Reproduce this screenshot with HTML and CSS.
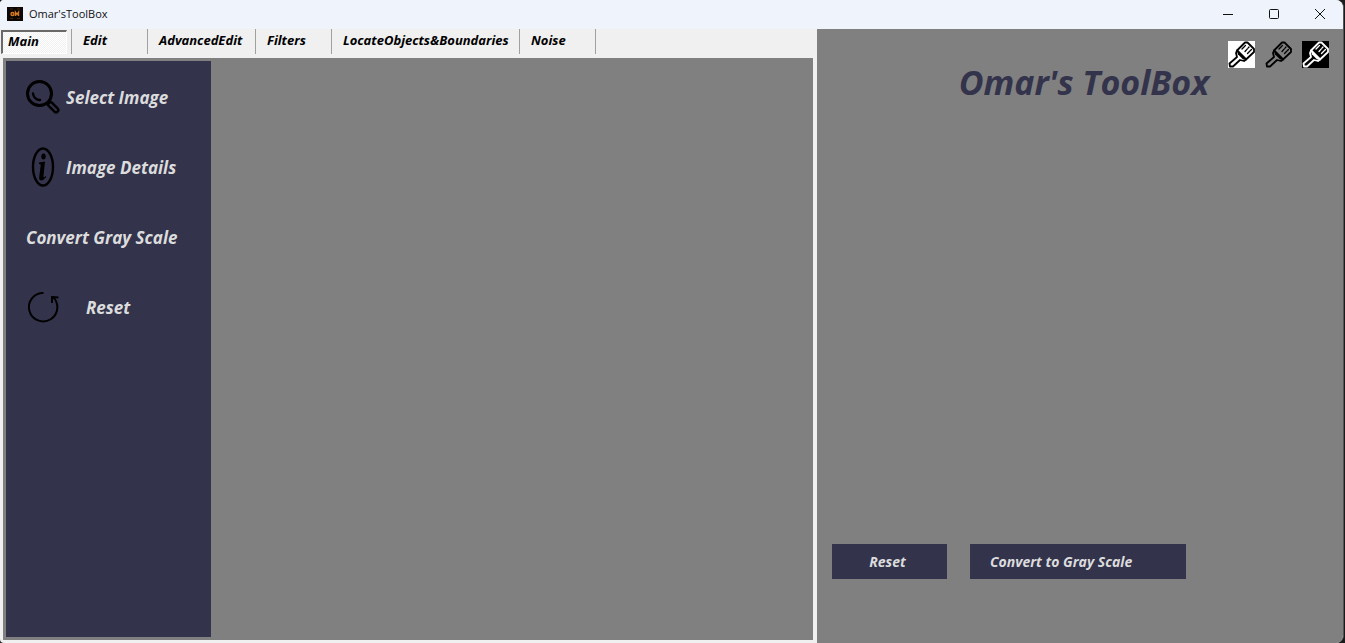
FILE: index.html
```html
<!DOCTYPE html>
<html lang="en">
<head>
<meta charset="utf-8">
<title>Omar'sToolBox</title>
<link rel="stylesheet" href="styles.css">
</head>
<body>
<svg class="defs" aria-hidden="true">
  <symbol id="brush" viewBox="0 0 27 27">
    <g stroke="currentColor" fill="none" stroke-width="1.8" stroke-linejoin="round" stroke-linecap="round">
      <path d="M17 1.500L19.500 1.500L26 8V11L18 18.500L9 9.500Z"/>
      <path d="M9 9.500L18 18.500L16 20L12 19L5 25.500L2 25.500L1.500 22.500L9 16L8 12Z"/>
      <path d="M10.500 12.500L15.500 17.500"/>
      <path d="M14 8L17.500 4.500M17 10.500L21 6M19.500 12.500L23.500 8.500" stroke-width="1.300" stroke-dasharray="3.500 1"/>
    </g>
  </symbol>
</svg>
<div class="window">
  <header class="titlebar">
    <svg class="logo" viewBox="0 0 16 14" aria-hidden="true">
      <rect width="16" height="14" fill="#0c0805"/>
      <path d="M3 2h3M10 2h3M3 11.500h3M10 11.500h3" stroke="#4a2508"/>
      <ellipse cx="5.500" cy="7" rx="1.500" ry="1.500" fill="none" stroke="#d97a22" stroke-width="1.400"/>
      <path d="M8.500 9V5.200L10 7.300L11.500 5.200V9" fill="none" stroke="#d97a22" stroke-width="1.400"/>
    </svg>
    <span class="caption">Omar'sToolBox</span>
    <div class="controls">
      <button class="control" aria-label="Minimize"><svg viewBox="0 0 12 12"><path d="M1 6.500h10"/></svg></button>
      <button class="control" aria-label="Maximize"><svg viewBox="0 0 12 12"><rect x="1.500" y="1.500" width="9" height="9" rx="1"/></svg></button>
      <button class="control" aria-label="Close"><svg viewBox="0 0 12 12"><path d="M1 1l10 10M11 1L1 11"/></svg></button>
    </div>
  </header>
  <div class="content">
    <section class="workspace">
      <nav class="tabs">
        <button class="tab active">Main</button>
        <button class="tab">Edit</button>
        <button class="tab wide">AdvancedEdit</button>
        <button class="tab">Filters</button>
        <button class="tab widest">LocateObjects&amp;Boundaries</button>
        <button class="tab">Noise</button>
      </nav>
      <div class="page">
        <aside class="sidebar">
          <button class="action">
            <svg class="icon" viewBox="0 0 34 40" fill="none" stroke="#000" aria-hidden="true">
              <circle cx="13.500" cy="16.500" r="12" stroke-width="3"/>
              <path d="M7 16.500a7 7 0 0 0 7 6.500" stroke-width="2.400" stroke-linecap="round"/>
              <path d="M24 27L30 33" stroke-width="7" stroke-linecap="round"/>
              <path d="M22 25L24 27" stroke-width="3"/>
              <path d="M24.500 27.500L30 33" stroke="#33334c" stroke-width="2" stroke-linecap="round"/>
            </svg>
            <span>Select Image</span>
          </button>
          <button class="action">
            <svg class="icon" viewBox="0 0 34 40" aria-hidden="true">
              <ellipse cx="17" cy="20" rx="10" ry="18.500" fill="none" stroke="#000" stroke-width="2.400"/>
              <ellipse cx="17.500" cy="9.500" rx="2.200" ry="3"/>
              <path d="M13 15.500L19 14.500L17.500 29Q17.500 31.500 19.500 29L20.300 30Q17.500 33.500 15 33.500Q12.700 33 13.200 30L14.800 17.500L13 17Z"/>
            </svg>
            <span>Image Details</span>
          </button>
          <button class="action"><span>Convert Gray Scale</span></button>
          <button class="action">
            <svg class="icon" viewBox="0 0 34 40" fill="none" stroke="#000" stroke-width="2" aria-hidden="true">
              <path d="M17.500 6A14.200 14.200 0 1 0 26.500 9.500"/>
              <path d="M26 16V10L32.500 10.500"/>
            </svg>
            <span class="label-indent">Reset</span>
          </button>
        </aside>
      </div>
    </section>
    <main class="panel">
      <div class="themes">
        <button class="theme light" aria-label="Light theme"><svg><use href="#brush"/></svg></button>
        <button class="theme" aria-label="Gray theme"><svg><use href="#brush"/></svg></button>
        <button class="theme dark" aria-label="Dark theme"><svg><use href="#brush"/></svg></button>
      </div>
      <h1 class="title">Omar's ToolBox</h1>
      <div class="buttons">
        <button class="command">Reset</button>
        <button class="command convert">Convert to Gray Scale</button>
      </div>
    </main>
  </div>
</div>
</body>
</html>
```
FILE: styles.css
```css
* { box-sizing: border-box; }
body {
  margin: 0;
  background: #1b1b1b;
  font-family: "Comic Sans MS", "Open Sans", sans-serif;
}
button {
  margin: 0;
  padding: 0;
  border: 0;
  background: none;
  color: inherit;
  font: inherit;
}
.defs { position: absolute; width: 0; height: 0; }
.window {
  display: flex;
  flex-direction: column;
  min-height: 100vh;
  margin-right: 1px;
  border-right: 1px solid #555;
  border-radius: 4px 8px 8px 4px;
  background: #f0f0f0;
  overflow: hidden;
}
.titlebar {
  display: flex;
  align-items: center;
  height: 29px;
  padding-left: 7px;
  padding-bottom: 2px;
  background: #eff3fb;
}
.logo { width: 16px; height: 14px; }
.caption {
  margin-left: 6px;
  color: #111;
  font: 11px "Open Sans", sans-serif;
}
.controls { display: flex; margin-left: auto; }
.control {
  display: flex;
  align-items: center;
  justify-content: center;
  width: 46px;
  height: 27px;
}
.control svg { width: 12px; height: 12px; fill: none; stroke: #111; }
.content {
  display: grid;
  flex: 1;
  grid-template-columns: minmax(0, 817fr) minmax(0, 526fr);
}
.workspace {
  display: flex;
  flex-direction: column;
  padding: 0 4px 3px 3px;
}
.tabs { display: flex; height: 29px; margin-left: -2px; }
.tab {
  min-width: 76px;
  height: 25px;
  padding: 0 8px 2px 11px;
  border-right: 1px solid #a0a0a0;
  font-size: 13px;
  font-style: italic;
  font-weight: 700;
  line-height: 23px;
  text-align: left;
  white-space: nowrap;
}
.tab.active {
  min-width: 66px;
  height: 24px;
  margin: 1px 4px 0 0;
  padding-left: 5px;
  border: 1px solid #fff;
  border-top: 2px solid #696969;
  border-left: 2px solid #696969;
  background: repeating-conic-gradient(#fff 0 25%, #f0f0f0 0 50%) 0 0 / 2px 2px;
  line-height: 19px;
}
.tab.active + .tab { min-width: 77px; border-left: 1px solid #a0a0a0; }
.tab.wide { min-width: 108px; }
.tab.widest { min-width: 188px; }
.page { display: flex; flex: 1; padding: 3px; background: #808080; }
.sidebar {
  display: flex;
  flex-direction: column;
  width: 205px;
  padding-top: 1px;
  background: #33334c;
}
.action {
  display: flex;
  align-items: center;
  gap: 6px;
  height: 70px;
  padding-left: 20px;
  color: #dcdcdc;
  font-size: 17px;
  font-style: italic;
  font-weight: 700;
  white-space: nowrap;
}
.icon { flex: none; width: 34px; height: 40px; }
.label-indent { margin-left: 20px; }
.panel {
  display: flex;
  flex-direction: column;
  padding: 12px 14px 64px;
  background: #808080;
}
.themes { display: flex; justify-content: flex-end; gap: 10px; }
.theme { width: 27px; height: 27px; }
.theme svg { display: block; width: 27px; height: 27px; }
.theme.light { background: #fff; }
.theme.dark { background: #000; color: #fff; }
.title {
  margin: 0;
  padding-left: 8px;
  color: #33334c;
  font-size: 34px;
  font-style: italic;
  font-weight: 700;
  line-height: 28px;
  text-align: center;
}
.buttons { display: flex; gap: 23px; margin-top: auto; padding-left: 1px; }
.command {
  width: 115px;
  height: 35px;
  padding-right: 4px;
  background: #33334c;
  color: #dcdcdc;
  font-size: 14px;
  font-style: italic;
  font-weight: 700;
}
.command.convert { width: 216px; padding-left: 20px; text-align: left; }
```
